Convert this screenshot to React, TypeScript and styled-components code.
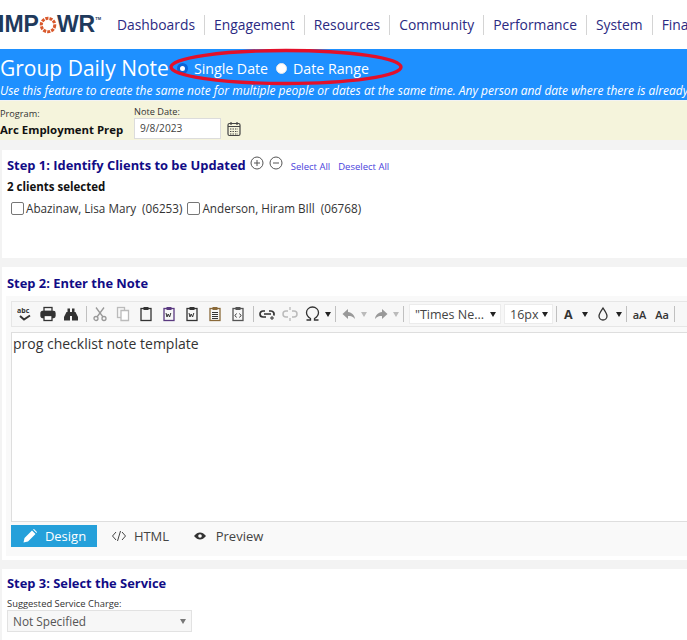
import React from "react";
import styled, { createGlobalStyle } from "styled-components";

const Global = createGlobalStyle`
  html, body { margin: 0; padding: 0; background: #f3f3f3; }
  body { width: 687px; height: 640px; overflow: hidden; font-family: "Open Sans", "Noto Sans", sans-serif; }
  * { box-sizing: border-box; }
`;

const Page = styled.div`
  width: 687px;
  height: 640px;
  overflow: hidden;
  display: flex;
  flex-direction: column;
`;

const Nav = styled.nav`
  height: 49px;
  flex: none;
  background: #fff;
  display: flex;
  align-items: center;
  white-space: nowrap;
  overflow: hidden;
`;

const Logo = styled.div`
  width: 119px;
  flex: none;
  margin-left: -2px;
  display: flex;
  align-items: center;
  font: 700 23px "Liberation Sans", sans-serif;
  color: #1f3a5c;
`;

const LogoO = styled.svg`
  width: 18px;
  height: 18px;
  flex: none;
`;

const Tm = styled.span`
  font-size: 4px;
  align-self: flex-start;
  margin-top: 5px;
`;

const NavItem = styled.a<{ $first?: boolean }>`
  font-size: 13.85px;
  color: #2b2a82;
  height: 20px;
  line-height: 20px;
  padding: 0 9px 0 ${(p) => (p.$first ? "0" : "9px")};
  border-right: 1px solid #d4d4d4;
  flex: none;
  &:last-child { border-right: none; }
`;

const Banner = styled.header`
  height: 51px;
  flex: none;
  background: #1e90ff;
  color: #fff;
  position: relative;
`;

const TitleRow = styled.div`
  display: flex;
  align-items: center;
  height: 32px;
  padding-top: 6px;
  white-space: nowrap;
`;

const Title = styled.h1`
  margin: 0 8px 0 0;
  font-size: 21px;
  font-weight: 400;
  line-height: 26px;
`;

const RadioLabel = styled.label`
  display: inline-flex;
  align-items: center;
  font-size: 14.2px;
  margin-right: 8px;
`;

const RadioDot = styled.span<{ $on?: boolean }>`
  width: 11px;
  height: 11px;
  border-radius: 50%;
  margin-right: 6px;
  background: #fff;
  border: ${(p) => (p.$on ? "3px solid #0a63d8" : "1px solid #e8e8e8")};
  flex: none;
`;

const BannerNote = styled.p`
  margin: 1px 0 0;
  font-size: 12px;
  font-style: italic;
  line-height: 18px;
  white-space: nowrap;
  overflow: hidden;
`;

const Ellipse = styled.svg`
  position: absolute;
  left: 168px;
  top: -3px;
  width: 236px;
  height: 42px;
  pointer-events: none;
`;

const ProgramBar = styled.section`
  margin-top: 1px;
  height: 39px;
  flex: none;
  background: #f5f4dc;
  display: flex;
  color: #222;
`;

const ProgramCol = styled.div`
  width: 134px;
  flex: none;
  padding-top: 7px;
  white-space: nowrap;
`;

const SmallLabel = styled.div`
  font-size: 9.2px;
  line-height: 12px;
  color: #333;
`;

const ProgramName = styled.div`
  font-size: 11.4px;
  font-weight: 700;
  color: #111;
  line-height: 15px;
  margin-top: 2px;
`;

const DateCol = styled.div`
  padding-top: 5px;
`;

const DateRow = styled.div`
  display: flex;
  align-items: center;
  gap: 6px;
`;

const DateInput = styled.div`
  width: 87px;
  height: 21px;
  background: #fff;
  border: 1px solid #dcdcdc;
  font-size: 10.2px;
  line-height: 19px;
  padding-left: 5px;
  color: #444;
`;

const Panel = styled.section<{ $h: number; $mt: number }>`
  margin: ${(p) => p.$mt}px 0 0 2px;
  height: ${(p) => p.$h}px;
  flex: none;
  background: #fff;
  padding-left: 5px;
  overflow: hidden;
`;

const StepHead = styled.div<{ $mt: number }>`
  display: flex;
  align-items: center;
  white-space: nowrap;
  height: 20px;
  margin-top: ${(p) => p.$mt}px;
`;

const StepTitle = styled.h2`
  margin: 0;
  font-size: 12.9px;
  font-weight: 700;
  color: #110c86;
  line-height: 20px;
`;

const RoundIcons = styled.span`
  display: inline-flex;
  gap: 5px;
  margin: 0 8px 5px 4px;
`;

const SmallLink = styled.a`
  font-size: 9.5px;
  color: #4a3fdc;
  margin-right: 8px;
  margin-top: 3px;
`;

const Count = styled.div`
  font-size: 11.5px;
  font-weight: 700;
  color: #111;
  line-height: 14px;
  margin-top: 5px;
`;

const Clients = styled.div`
  display: flex;
  align-items: center;
  margin: 6px 0 0 4px;
  font-size: 11.7px;
  color: #333;
  white-space: pre;
  line-height: 16px;
`;

const CheckBox = styled.span`
  width: 13px;
  height: 13px;
  border: 1px solid #767676;
  border-radius: 2px;
  background: #fff;
  margin-right: 2px;
  flex: none;
`;

const ClientName = styled.span`
  margin-right: 5px;
`;

const Editor = styled.div`
  margin: 3px 0 0 -1px;
  background: #f9f9f9;
  padding: 5px 0 9px 0;
`;

const Toolbar = styled.div`
  height: 26px;
  margin-left: 5px;
  background: #f7f7f7;
  border: 1px solid #e6e6e6;
  border-right: none;
  display: flex;
  align-items: center;
  padding-left: 5px;
  white-space: nowrap;
  overflow: hidden;
`;

const Tool = styled.svg<{ $w?: number; $mr?: number }>`
  width: ${(p) => p.$w ?? 16}px;
  height: 16px;
  margin-right: ${(p) => p.$mr ?? 7}px;
  flex: none;
  color: #333;
`;

const Sep = styled.span<{ $mr?: number }>`
  width: 1px;
  height: 16px;
  background: #c0c0c0;
  margin: 0 ${(p) => p.$mr ?? 5}px 0 0;
  flex: none;
`;

const Caret = styled.span<{ $c?: string; $mr?: number }>`
  width: 0;
  height: 0;
  border-left: 3.5px solid transparent;
  border-right: 3.5px solid transparent;
  border-top: 5px solid ${(p) => p.$c ?? "#222"};
  margin-right: ${(p) => p.$mr ?? 5}px;
  flex: none;
`;

const Drop = styled.div<{ $w: number }>`
  width: ${(p) => p.$w}px;
  height: 20px;
  background: #fff;
  border: 1px solid #ececec;
  margin-right: 3px;
  padding: 0 4px 0 5px;
  display: flex;
  align-items: center;
  justify-content: space-between;
  font-size: 12.5px;
  color: #444;
  flex: none;
`;

const Aa = styled.span<{ $mr: number; $big?: boolean }>`
  font-size: ${(p) => (p.$big ? 12.5 : 11)}px;
  font-weight: ${(p) => (p.$big ? 700 : 600)};
  color: #333;
  margin-right: ${(p) => p.$mr}px;
  flex: none;
`;

const EditArea = styled.div`
  height: 190px;
  margin: 5px 0 0 5px;
  background: #fff;
  border: 1px solid #dedede;
  border-right: none;
  padding: 1px 0 0 1px;
  font-size: 14px;
  line-height: 20px;
  color: #333;
`;

const Tabs = styled.div`
  display: flex;
  align-items: center;
  height: 22px;
  margin: 3px 0 0 5px;
  font-size: 13px;
  color: #444;
`;

const Tab = styled.div<{ $active?: boolean; $w: number }>`
  width: ${(p) => p.$w}px;
  height: 22px;
  display: flex;
  align-items: center;
  justify-content: center;
  gap: 7px;
  background: ${(p) => (p.$active ? "#25a0da" : "transparent")};
  color: ${(p) => (p.$active ? "#fff" : "#444")};
  flex: none;
`;

const ServiceLabel = styled.div`
  font-size: 9.4px;
  line-height: 12px;
  color: #333;
  margin-top: 5px;
`;

const ServiceSelect = styled.div`
  width: 185px;
  height: 22px;
  background: #f7f7f7;
  border: 1px solid #e2e2e2;
  padding: 0 5px;
  display: flex;
  align-items: center;
  justify-content: space-between;
  font-size: 11.8px;
  color: #555;
`;

const Ic = ({ children, w, mr }: { children: React.ReactNode; w?: number; mr?: number }) => (
  <Tool $w={w} $mr={mr} viewBox={`0 0 ${w ?? 16} 16`} fill="none" stroke="currentColor" strokeWidth="1.3">
    {children}
  </Tool>
);

const Clip = ({ label, c = "#333" }: { label: string; c?: string }) => (
  <Ic>
    <rect x="3" y="2.5" width="10" height="12" stroke={c} />
    <rect x="5.5" y="1" width="5" height="3" fill={c} stroke="none" />
    {label === "W" && <path d="M5 7l1 4 1.2-3 1.4 3 1.2-4" strokeWidth="1" />}
    {label === "L" && <path d="M5 6.5h6M5 8.500h6M5 10.500h6M5 12.500h6" strokeWidth="1" />}
    {label === "C" && <path d="M6.5 7.500L5 9.500l1.500 2M9.500 7.500l1.500 2-1.500 2" strokeWidth="1" />}
  </Ic>
);

export default function App() {
  return (
    <Page>
      <Global />
      <Nav>
        <Logo>
          IMP
          <LogoO viewBox="0 0 20 20">
            <circle cx="10" cy="10" r="7.5" fill="none" stroke="#d9582b" strokeWidth="3.4" strokeDasharray="3.4 1.2" />
          </LogoO>
          WR<Tm>TM</Tm>
        </Logo>
        <NavItem $first>Dashboards</NavItem>
        <NavItem>Engagement</NavItem>
        <NavItem>Resources</NavItem>
        <NavItem>Community</NavItem>
        <NavItem>Performance</NavItem>
        <NavItem>System</NavItem>
        <NavItem>Finance</NavItem>
      </Nav>

      <Banner>
        <TitleRow>
          <Title>Group Daily Note</Title>
          <RadioLabel><RadioDot $on />Single Date</RadioLabel>
          <RadioLabel><RadioDot />Date Range</RadioLabel>
        </TitleRow>
        <BannerNote>
          Use this feature to create the same note for multiple people or dates at the same time. Any person and date where there is already a note
        </BannerNote>
        <Ellipse viewBox="0 0 236 42">
          <ellipse cx="118" cy="21" rx="115" ry="16.5" fill="none" stroke="#e3102a" strokeWidth="3.4" />
        </Ellipse>
      </Banner>

      <ProgramBar>
        <ProgramCol>
          <SmallLabel>Program:</SmallLabel>
          <ProgramName>Arc Employment Prep</ProgramName>
        </ProgramCol>
        <DateCol>
          <SmallLabel>Note Date:</SmallLabel>
          <DateRow>
            <DateInput>9/8/2023</DateInput>
            <Tool $w={14} $mr={0} viewBox="0 0 14 16" fill="none" stroke="#444" strokeWidth="1.2">
              <rect x="1" y="2.5" width="12" height="12" rx="1.5" />
              <path d="M1 5.5h12M4 1v3M10 1v3" />
              <path d="M3 8h8M3 10.5h8M3 13h8" strokeDasharray="1.4 1.1" />
            </Tool>
          </DateRow>
        </DateCol>
      </ProgramBar>

      <Panel $mt={10} $h={108}>
        <StepHead $mt={5}>
          <StepTitle>Step 1: Identify Clients to be Updated</StepTitle>
          <RoundIcons>
            <Tool $w={14} $mr={0} viewBox="0 0 14 14" fill="none" stroke="#555" strokeWidth="1">
              <circle cx="7" cy="7" r="6" />
              <path d="M4 7h6M7 4v6" />
            </Tool>
            <Tool $w={14} $mr={0} viewBox="0 0 14 14" fill="none" stroke="#555" strokeWidth="1">
              <circle cx="7" cy="7" r="6" />
              <path d="M4 7h6" />
            </Tool>
          </RoundIcons>
          <SmallLink>Select All</SmallLink>
          <SmallLink>Deselect All</SmallLink>
        </StepHead>
        <Count>2 clients selected</Count>
        <Clients>
          <CheckBox /><ClientName>Abazinaw, Lisa Mary  (06253)</ClientName>
          <CheckBox /><ClientName>Anderson, Hiram BIll  (06768)</ClientName>
        </Clients>
      </Panel>

      <Panel $mt={9} $h={293}>
        <StepHead $mt={6}>
          <StepTitle>Step 2: Enter the Note</StepTitle>
        </StepHead>
        <Editor>
          <Toolbar>
            <Ic><text x="0" y="7" fontSize="7" fontWeight="700" fill="#333" stroke="none" fontFamily="Open Sans">abc</text><path d="M3 10l4 3.5 6-4" strokeWidth="2" /></Ic>
            <Ic><rect x="4" y="1.5" width="8" height="4" /><rect x="1" y="5.5" width="14" height="6" rx="1.5" fill="#333" /><rect x="4" y="9.5" width="8" height="5" fill="#fff" /></Ic>
            <Ic><path d="M4.500 2.500h2.500v4H4.500zM9 2.500h2.500v4H9z" fill="#333" stroke="none" /><path d="M3.500 6h3.500v8.500H1v-3.500zM12.500 6H9v8.500h6v-3.500z" fill="#333" stroke="none" /><rect x="7" y="6" width="2" height="4" fill="#333" stroke="none" /></Ic>
            <Sep />
            <Ic><g stroke="#999"><circle cx="4" cy="12.5" r="2" /><circle cx="12" cy="12.5" r="2" /><path d="M5 11L12 1.5M11 11L4 1.5" /></g></Ic>
            <Ic><g stroke="#bbb"><rect x="2.5" y="1.5" width="7" height="10" /><path d="M6 4.5h7.5v10H6z" fill="#fff" /></g></Ic>
            <Clip label="" />
            <Clip label="W" c="#5a3a80" />
            <Clip label="W" />
            <Clip label="L" c="#8a6a3a" />
            <Clip label="C" c="#555" />
            <Sep />
            <Ic><path d="M6 5H4a3 3 0 000 6h3M10 5h2a3 3 0 012.6 4.5M5 8h7" strokeWidth="1.7" /><path d="M11 12h4M13 10v4" strokeWidth="1" /></Ic>
            <Ic><path d="M6 5H4a3 3 0 000 6h2M10 5h2a3 3 0 010 6h-2" stroke="#bbb" strokeWidth="1.5" /><path d="M8 1v3M8 12v3" stroke="#bbb" /></Ic>
            <Tool $w={15} $mr={5} viewBox="0 0 15 16" fill="none" stroke="#333" strokeWidth="1.3">
              <path d="M1.500 14h4v-1.500C3 11 1.500 9 1.500 6.500a6 5.500 0 0112 0c0 2.500-1.500 4.500-4 6V14h4" />
            </Tool>
            <Caret $mr={4} />
            <Sep />
            <Ic mr={4}><path d="M7 3L1.500 8 7 13v-3c3 0 5 .5 7 3-.5-4-3-6.500-7-7z" fill="#999" stroke="none" /></Ic>
            <Caret $c="#bbb" $mr={6} />
            <Ic mr={4}><path d="M9 3l5.500 5L9 13v-3c-3 0-5 .5-7 3 .5-4 3-6.500 7-7z" fill="#999" stroke="none" /></Ic>
            <Caret $c="#bbb" $mr={4} />
            <Sep />
            <Drop $w={92}>"Times Ne...<Caret $mr={0} /></Drop>
            <Drop $w={49}>16px<Caret $mr={0} /></Drop>
            <Sep $mr={7} />
            <Aa $mr={9} $big>A</Aa>
            <Caret $mr={8} />
            <Ic w={14} mr={6}><path d="M7 2C5 5 3 7.500 3 10a4 4 0 008 0c0-2.500-2-5-4-8z" /></Ic>
            <Caret $mr={4} />
            <Sep $mr={6} />
            <Aa $mr={9}>aA</Aa>
            <Aa $mr={5}>Aa</Aa>
            <Sep />
          </Toolbar>
          <EditArea>prog checklist note template</EditArea>
          <Tabs>
            <Tab $active $w={86}>
              <Tool $w={16} $mr={0} viewBox="0 0 16 16" fill="#fff" stroke="none">
                <path d="M1.500 14.500l1-4.500 7.500-7.500 3.500 3.500L6 13.500zM11 1.500l1-.5 3 3-.5 1z" />
              </Tool>
              Design
            </Tab>
            <Tab $w={86}>
              <Tool $w={16} $mr={0} viewBox="0 0 16 16" fill="none" stroke="#444" strokeWidth="1">
                <path d="M5 4L1.500 8 5 12M11 4l3.500 4-3.500 4M9.500 3l-3 10" />
              </Tool>
              HTML
            </Tab>
            <Tab $w={90}>
              <Tool $w={14} $mr={2} viewBox="0 0 14 16">
                <path d="M1 8c2-2.500 4-3.500 6-3.500s4 1 6 3.500c-2 2.500-4 3.500-6 3.500S3 10.500 1 8z" fill="#333" />
                <circle cx="7" cy="8" r="1.800" fill="#fff" />
              </Tool>
              Preview
            </Tab>
          </Tabs>
        </Editor>
      </Panel>

      <Panel $mt={9} $h={71}>
        <StepHead $mt={4}>
          <StepTitle>Step 3: Select the Service</StepTitle>
        </StepHead>
        <ServiceLabel>Suggested Service Charge:</ServiceLabel>
        <ServiceSelect>Not Specified<Caret $c="#777" $mr={0} /></ServiceSelect>
      </Panel>
    </Page>
  );
}
